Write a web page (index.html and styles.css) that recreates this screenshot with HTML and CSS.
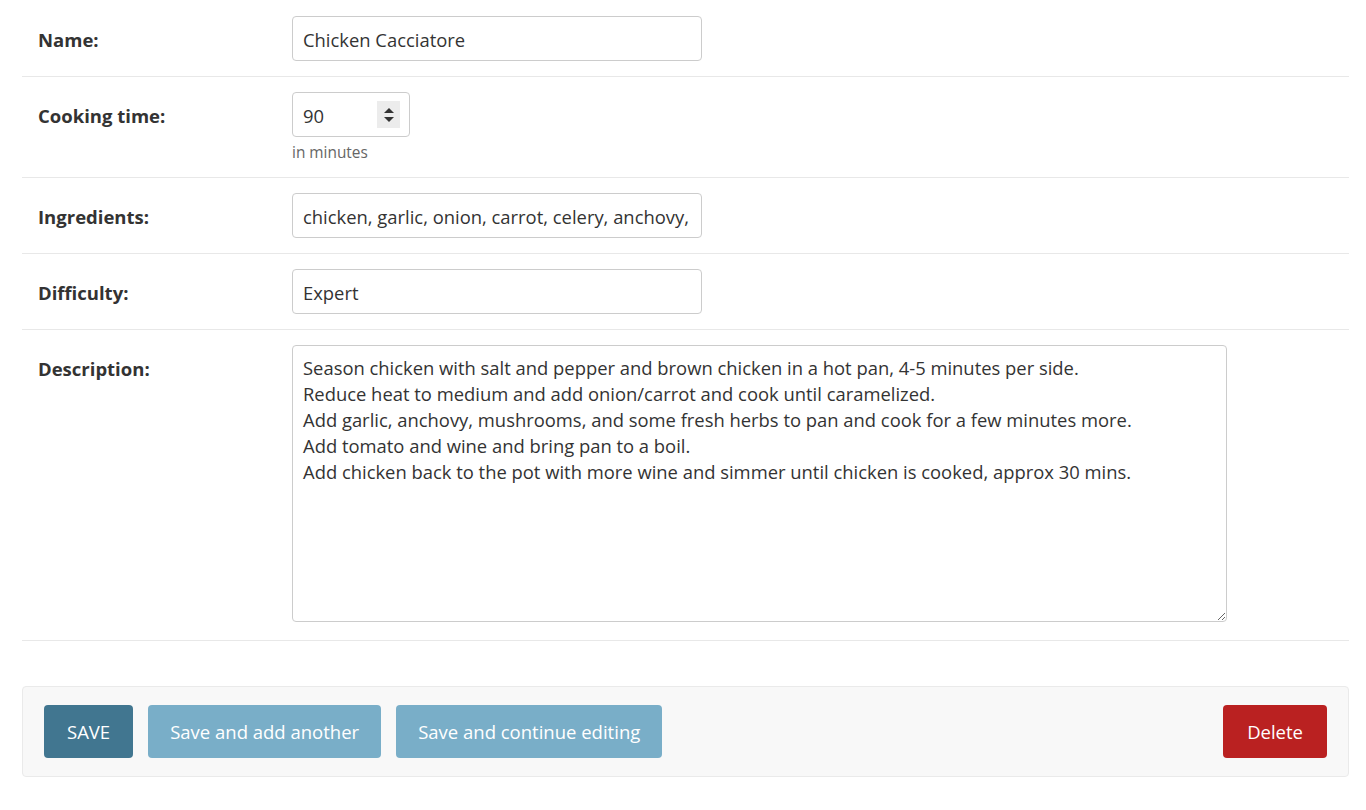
FILE: index.html
```html
<!DOCTYPE html>
<html lang="en">
<head>
<meta charset="utf-8">
<title>Change recipe</title>
<link rel="stylesheet" href="styles.css">
</head>
<body>
<form class="form">
  <fieldset class="fieldset">
    <div class="row">
      <label class="label" for="f-name">Name:</label>
      <div class="field">
        <input class="input input-wide" id="f-name" type="text" value="Chicken Cacciatore">
      </div>
    </div>
    <div class="row">
      <label class="label" for="f-time">Cooking time:</label>
      <div class="field">
        <div class="number">
          <input class="input input-num" id="f-time" type="text" value="90">
          <span class="spinner">
            <svg width="12" height="20" viewBox="0 0 12 20"><path d="M1 8 L6 3 L11 8 Z" fill="#333"/><path d="M1 12 L6 17 L11 12 Z" fill="#333"/></svg>
          </span>
        </div>
        <div class="help">in minutes</div>
      </div>
    </div>
    <div class="row">
      <label class="label" for="f-ing">Ingredients:</label>
      <div class="field">
        <input class="input input-wide" id="f-ing" type="text" value="chicken, garlic, onion, carrot, celery, anchovy, mushrooms, tomato, wine, herbs">
      </div>
    </div>
    <div class="row">
      <label class="label" for="f-diff">Difficulty:</label>
      <div class="field">
        <input class="input input-wide" id="f-diff" type="text" value="Expert">
      </div>
    </div>
    <div class="row">
      <label class="label" for="f-desc">Description:</label>
      <div class="field">
        <textarea class="textarea" id="f-desc">Season chicken with salt and pepper and brown chicken in a hot pan, 4-5 minutes per side.
Reduce heat to medium and add onion/carrot and cook until caramelized.
Add garlic, anchovy, mushrooms, and some fresh herbs to pan and cook for a few minutes more.
Add tomato and wine and bring pan to a boil.
Add chicken back to the pot with more wine and simmer until chicken is cooked, approx 30 mins.</textarea>
      </div>
    </div>
  </fieldset>
  <div class="submit-row">
    <button type="button" class="btn btn-default">SAVE</button>
    <button type="button" class="btn btn-light">Save and add another</button>
    <button type="button" class="btn btn-light">Save and continue editing</button>
    <span class="spacer"></span>
    <button type="button" class="btn btn-delete">Delete</button>
  </div>
</form>
</body>
</html>
```
FILE: styles.css
```css
html, body {
  margin: 0;
  padding: 0;
  background: #fff;
}
body {
  font-family: "Open Sans", "Noto Sans", sans-serif;
  color: #333;
}
.form {
  margin: 0 17px 0 22px;
  padding-top: 1px;
}
.fieldset {
  border: 0;
  margin: 0;
  padding: 0;
}
.row {
  display: flex;
  align-items: flex-start;
  padding: 15px 16px;
  border-bottom: 1px solid #e8e8e8;
}
.label {
  width: 254px;
  flex: none;
  padding-top: 2px;
  font-weight: 700;
  font-size: 18.5px;
  line-height: 43px;
  color: #333;
}
.field {
  display: flex;
  flex-direction: column;
}
.input {
  box-sizing: border-box;
  height: 45px;
  border: 1px solid #ccc;
  border-radius: 4px;
  padding: 1px 10px 0;
  font-family: inherit;
  font-size: 18.4px;
  color: #333;
  background: #fff;
  outline: none;
}
.input-wide {
  width: 410px;
}
.number {
  position: relative;
  width: 118px;
}
.input-num {
  width: 118px;
}
.spinner {
  position: absolute;
  left: 85px;
  top: 9px;
  width: 23px;
  height: 27px;
  background: #ececec;
  display: flex;
  align-items: center;
  justify-content: center;
}
.help {
  margin-top: 6px;
  font-size: 15.4px;
  line-height: 19px;
  color: #666;
}
.textarea {
  display: block;
  box-sizing: border-box;
  width: 935px;
  height: 277px;
  margin-bottom: 3px;
  border: 1px solid #ccc;
  border-radius: 4px;
  padding: 9px 10px;
  font-family: inherit;
  font-size: 18.4px;
  line-height: 26px;
  color: #333;
  outline: none;
}
.submit-row {
  display: flex;
  align-items: center;
  gap: 15px;
  margin-top: 45px;
  padding: 18px 21px;
  background: #f8f8f8;
  border: 1px solid #eaeaea;
  border-radius: 4px;
}
.spacer {
  flex: 1;
}
.btn {
  height: 53px;
  border: 0;
  border-radius: 4px;
  padding: 0 23px;
  font-family: inherit;
  font-size: 18.5px;
  color: #fff;
  cursor: pointer;
}
.btn-default {
  background: #417690;
}
.btn-light {
  padding: 0 22px;
  background: #79aec8;
}
.btn-delete {
  padding: 0 24px;
  background: #ba2121;
}
```
